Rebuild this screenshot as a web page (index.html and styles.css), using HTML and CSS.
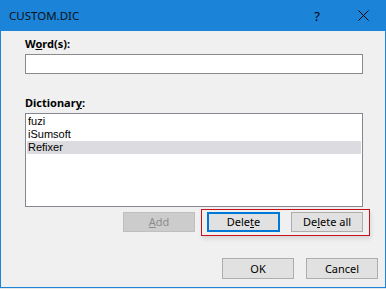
FILE: index.html
```html
<!DOCTYPE html>
<html lang="en">
<head>
    <meta charset="UTF-8">
    <title>CUSTOM.DIC</title>
    <link rel="stylesheet" href="styles.css">
</head>
<body>
    <div class="dialog">
        <div class="titlebar">
            <span class="title">CUSTOM.DIC</span>
            <span class="caption-btn help">?</span>
            <span class="caption-btn close">
                <svg width="11" height="11" viewBox="0 0 11 11">
                    <path d="M0.5 0.5 L10.5 10.5 M10.5 0.5 L0.5 10.5" stroke="#000" stroke-width="1" fill="none"/>
                </svg>
            </span>
        </div>

        <div class="content">
            <label class="field-label">W<u>o</u>rd(s):</label>
            <div class="textbox"></div>

            <label class="field-label dict-label">Dictionar<u>y</u>:</label>
            <div class="listbox">
                <div class="item">fuzi</div>
                <div class="item">iSumsoft</div>
                <div class="item selected">Refixer</div>
            </div>

            <div class="row edit-row">
                <button class="btn disabled"><u>A</u>dd</button>
                <div class="highlight">
                    <button class="btn focused">Dele<u>t</u>e</button>
                    <button class="btn">De<u>l</u>ete all</button>
                </div>
            </div>

            <div class="row footer-row">
                <button class="btn tall">OK</button>
                <button class="btn tall">Cancel</button>
            </div>
        </div>
    </div>
</body>
</html>
```

FILE: styles.css
```css
* {
    margin: 0;
    padding: 0;
    box-sizing: border-box;
}

body {
    font-family: 'Noto Sans', 'Liberation Sans', sans-serif;
    font-size: 11px;
    color: #000;
    background: #e6e6e6;
}

.dialog {
    width: 386px;
    height: 288px;
    background: #f0f0f0;
    border: 1px solid #1b83d8;
    border-top: none;
}

.titlebar {
    height: 31px;
    background: #1b83d8;
    display: flex;
    align-items: center;
    margin: 0 -1px;
}

.title {
    flex: 1;
    padding-left: 9px;
    font-size: 11.5px;
    color: #111;
}

.caption-btn {
    width: 46px;
    height: 31px;
    display: flex;
    align-items: center;
    justify-content: center;
}

.help {
    font-size: 13px;
    color: #000;
    padding-top: 1px;
}

.close {
    padding-left: 1px;
}

.content {
    padding: 5px 0 0 24px;
}

.field-label {
    display: block;
    font-weight: 700;
    line-height: 16px;
    margin-bottom: 2px;
}

.dict-label {
    margin-top: 21px;
}

.textbox {
    width: 338px;
    height: 20px;
    background: #fff;
    border: 1px solid #8a8a8a;
}

.listbox {
    width: 338px;
    height: 94px;
    background: #fff;
    border: 1px solid #828790;
    padding: 1px;
}

.item {
    font-family: 'Liberation Sans', sans-serif;
    font-size: 11px;
    line-height: 13px;
    height: 13px;
    padding-left: 1px;
}

.item.selected {
    background: #dcdce0;
}

.row {
    display: flex;
    align-items: flex-start;
}

.edit-row {
    margin-top: 2px;
    padding-left: 98px;
}

.footer-row {
    margin-top: 22px;
    padding-left: 197px;
    gap: 12px;
}

.btn {
    width: 72px;
    height: 20px;
    font-family: inherit;
    font-size: 11px;
    color: #000;
    background: #e1e1e1;
    border: 1px solid #adadad;
    line-height: 16px;
}

.btn.tall {
    height: 21px;
}

.btn.disabled {
    background: #cccccc;
    border-color: #bfbfbf;
    color: #8c8c8c;
    margin-top: 3px;
}

.btn.focused {
    width: 73px;
    border: 2px solid #0078d7;
}

.highlight {
    display: flex;
    gap: 11px;
    margin-left: 6px;
    height: 27px;
    padding: 2px 6px 0 5px;
    border: 1px solid #c8101a;
    box-shadow: 1px 3px 4px rgba(0, 0, 0, 0.1);
}
```
